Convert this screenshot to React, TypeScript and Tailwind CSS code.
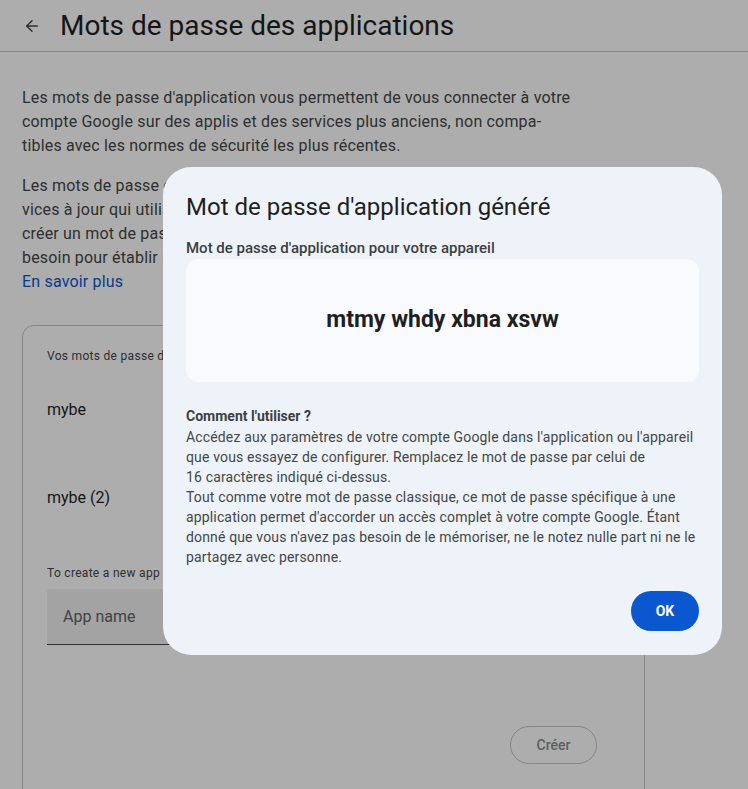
import { ArrowLeft, Trash2 } from 'lucide-react'

const font = { fontFamily: 'Roboto, "Noto Sans", Arial, sans-serif' }

function PasswordRow({ name }: { name: string }) {
  return (
    <div className="flex h-[88px] items-center justify-between">
      <span className="text-base text-[#1f1f1f]">{name}</span>
      <Trash2 className="h-5 w-5 text-[#444746]" />
    </div>
  )
}

export default function App() {
  return (
    <div className="relative h-[789px] overflow-hidden bg-white" style={font}>
      <header className="flex h-[52px] items-center gap-[19px] border-b border-[#c4c7c5] pl-[23px]">
        <ArrowLeft className="h-[18px] w-[18px] text-[#444746]" strokeWidth={2} />
        <h1 className="text-[28px] leading-9 text-[#1f1f1f]">Mots de passe des applications</h1>
      </header>

      <main className="px-[22px] pt-[34px]">
        <p className="text-base leading-6 tracking-[0.18px] text-[#444746]">
          Les mots de passe d'application vous permettent de vous connecter à votre
          <br />
          compte Google sur des applis et des services plus anciens, non compa-
          <br />
          tibles avec les normes de sécurité les plus récentes.
        </p>
        <p className="mt-4 text-base leading-6 tracking-[0.18px] text-[#444746]">
          Les mots de passe d'application sont inutiles pour la plupart des ser-
          <br />
          vices à jour qui utilisent les normes de sécurité modernes. Avant de
          <br />
          créer un mot de passe d'application, vérifiez si votre appli en a
          <br />
          besoin pour établir la connexion.
        </p>
        <a className="block text-base leading-6 tracking-[0.18px] text-[#0b57d0]">En savoir plus</a>

        <section className="mt-[31px] mr-[81px] h-[520px] rounded-xl border border-[#c4c7c5] px-6 pt-[22px]">
          <p className="text-xs leading-4 tracking-[0.3px] text-[#444746]">Vos mots de passe d'application</p>
          <div className="mt-[2px]">
            <PasswordRow name="mybe" />
            <PasswordRow name="mybe (2)" />
          </div>
          <p className="mt-[23px] text-xs leading-4 tracking-[0.3px] text-[#444746]">
            To create a new app specific password, type a name for it below...
          </p>
          <div className="mt-2 flex h-[56px] items-center rounded-t border-b border-[#444746] bg-[#f0f0f0] px-4">
            <span className="text-base text-[#5f6368]">App name</span>
          </div>
          <div className="mt-[81px] flex justify-end pr-[23px]">
            <button className="h-[38px] w-[87px] rounded-full border border-[#c4c7c5] text-sm font-medium text-[#8a8c8c]">
              Créer
            </button>
          </div>
        </section>
      </main>

      <div className="absolute inset-0 bg-black/[0.32]" />

      <div className="absolute left-[163px] top-[167px] w-[559px] rounded-[28px] bg-[#eef2f9] px-[23px] pb-6 pt-6">
        <h2 className="text-2xl leading-8 text-[#1f1f1f]">Mot de passe d'application généré</h2>
        <p className="mt-[15px] text-[15px] font-medium leading-5 text-[#3c4043]">
          Mot de passe d'application pour votre appareil
        </p>
        <div className="mt-px flex h-[123px] items-center justify-center rounded-xl bg-[#f8fafd]">
          <span className="text-[23px] font-bold text-[#1f1f1f]">mtmy whdy xbna xsvw</span>
        </div>
        <div className="mt-6 whitespace-nowrap text-sm leading-5 tracking-[0.15px] text-[#444746]">
          <p className="font-bold tracking-normal text-[#3c4043]">Comment l'utiliser ?</p>
          <p className="mt-px">
            Accédez aux paramètres de votre compte Google dans l'application ou l'appareil
            <br />
            que vous essayez de configurer. Remplacez le mot de passe par celui de
            <br />
            16 caractères indiqué ci-dessus.
          </p>
          <p>
            Tout comme votre mot de passe classique, ce mot de passe spécifique à une
            <br />
            application permet d'accorder un accès complet à votre compte Google. Étant
            <br />
            donné que vous n'avez pas besoin de le mémoriser, ne le notez nulle part ni ne le
            <br />
            partagez avec personne.
          </p>
        </div>
        <div className="mt-6 flex justify-end">
          <button className="h-10 w-[68px] rounded-full bg-[#0b57d0] text-sm font-bold text-white">OK</button>
        </div>
      </div>
    </div>
  )
}
